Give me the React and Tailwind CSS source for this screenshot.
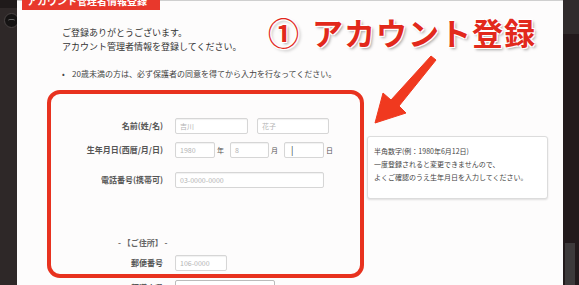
import React from 'react';

const jp = { fontFamily: '"Noto Sans CJK JP", "Noto Sans", sans-serif' };

const Field = ({ placeholder, className = '', children }) => (
  <div
    className={`h-[16px] border border-[#d6d6d6] rounded-[2px] bg-white shadow-[inset_0_1px_1px_rgba(0,0,0,0.06)] flex items-center px-[4px] text-[7px] text-[#b3b3b3] leading-none ${className}`}
  >
    {children || placeholder}
  </div>
);

const Row = ({ label, children, className = '' }) => (
  <div className={`flex items-center ${className}`}>
    <div className="w-[112px] text-right text-[8px] font-bold text-[#555] leading-[12px] whitespace-nowrap">
      {label}
    </div>
    <div className="ml-[12px] flex items-center">{children}</div>
  </div>
);

const Arrow = () => (
  <svg
    className="absolute left-[333px] top-[50px]"
    width="90"
    height="80"
    viewBox="350 50 90 80"
  >
    <polygon
      points="431,55 436,59 399,105 406,112 375,122 383,92 391,99"
      fill="#f0391f"
      stroke="#f0391f"
      strokeWidth="1"
      strokeLinejoin="round"
    />
  </svg>
);

export default function App() {
  return (
    <div className="w-[579px] h-[285px] overflow-hidden flex bg-[#2b2425]" style={jp}>
      {/* left page strip */}
      <div className="w-[17px] h-full overflow-hidden bg-[#2e2828] flex flex-col">
        <div className="h-[8px] bg-[#1f1a1a]" />
        <div className="ml-[4px] mt-[5px] w-[15px] h-[15px] rounded-full bg-[#151313] border border-[#4a4444] flex items-center justify-center">
          <div className="w-[7px] h-[4px] rounded-full border-t border-[#666]" />
        </div>
      </div>

      {/* modal */}
      <div className="relative flex-1 h-full bg-[#fdfcfc] border-t border-[#cfcfcf]">
        <div className="-mt-px ml-[5px] w-[138px] h-[10px] bg-[#e8382c] overflow-hidden">
          <div className="-mt-[6px] pl-[5px] text-[10px] font-bold text-white leading-[14px] whitespace-nowrap">
            アカウント管理者情報登録
          </div>
        </div>

        <div className="pl-[30px]">
          {/* intro + heading */}
          <div className="mt-[7px] flex items-start">
            <div className="w-[221px] pl-[15px] pt-[9px] text-[9px] leading-[14px] text-[#333] whitespace-nowrap">
              <p>ご登録ありがとうございます。</p>
              <p>アカウント管理者情報を登録してください。</p>
            </div>
            <div className="flex items-center text-[31px] leading-[30px] font-bold text-[#e2291c] whitespace-nowrap [text-shadow:-1px_-1px_0_#fff,1px_-1px_0_#fff,-1px_1px_0_#fff,1px_1px_0_#fff,2px_2px_3px_rgba(0,0,0,0.35)]">
              <span>①</span>
              <span className="ml-[13px] tracking-[1px]">アカウント登録</span>
            </div>
          </div>

          <div className="mt-[14px] pl-[15px] flex items-center text-[8px] leading-[12px] text-[#444] whitespace-nowrap">
            <span className="w-[10px]">•</span>
            <span>20歳未満の方は、必ず保護者の同意を得てから入力を行なってください。</span>
          </div>

          {/* form area */}
          <div className="mt-[10px] flex items-start">
            <div>
              <div className="w-[317px] h-[188px] border-[4px] border-[#e8321f] rounded-[13px] pt-[24px]">
                <Row label="名前(姓/名)">
                  <Field placeholder="吉川" className="w-[73px]" />
                  <Field placeholder="花子" className="w-[72px] ml-[9px]" />
                </Row>
                <Row label="生年月日(西暦/月/日)" className="mt-[8px]">
                  <Field placeholder="1980" className="w-[40px]" />
                  <span className="w-[15px] pl-[2px] text-[7px] text-[#555]">年</span>
                  <Field placeholder="8" className="w-[39px]" />
                  <span className="w-[15px] pl-[2px] text-[7px] text-[#555]">月</span>
                  <Field className="w-[40px] border-[#c4c4c4]">
                    <span className="text-[#333] text-[9px] pl-[2px]">|</span>
                  </Field>
                  <span className="pl-[2px] text-[7px] text-[#555]">日</span>
                </Row>
                <Row label="電話番号(携帯可)" className="mt-[14px]">
                  <Field placeholder="03-0000-0000" className="w-[149px]" />
                </Row>
                <div className="mt-[49px] pl-[67px] text-[8px] leading-[12px] font-bold text-[#666] whitespace-nowrap">
                  - 【ご住所】 -
                </div>
                <Row label="郵便番号" className="mt-[6px]">
                  <Field placeholder="106-0000" className="w-[52px]" />
                </Row>
              </div>
              <Row label="都道府県" className="mt-[2px] pl-[4px]">
                <div className="w-[100px] h-[16px] border border-[#bbb] rounded-[2px] bg-white flex items-center justify-between px-[4px] text-[7px] text-[#666]">
                  <span>選択してください</span>
                  <span>▾</span>
                </div>
              </Row>
            </div>

            <div className="ml-[3px] mt-[46px] w-[181px] h-[63px] border border-[#dcdcdc] rounded-[3px] bg-white shadow-[0_1px_2px_rgba(0,0,0,0.12)] pl-[6px] pt-[8px] text-[7px] leading-[13px] text-[#444] whitespace-nowrap">
              <p>半角数字(例：1980年6月12日)</p>
              <p>一度登録されると変更できませんので、</p>
              <p>よくご確認のうえ生年月日を入力してください。</p>
            </div>
          </div>
        </div>

        <Arrow />
      </div>

      {/* right page strip */}
      <div className="w-[16px] h-full bg-[#221a1c] flex flex-col">
        <div className="h-[34px] bg-[#302b2c]" />
        <div className="flex-1" />
        <div className="ml-[2px] w-[10px] h-[42px] bg-[#3d3a3b]" />
      </div>
    </div>
  );
}
